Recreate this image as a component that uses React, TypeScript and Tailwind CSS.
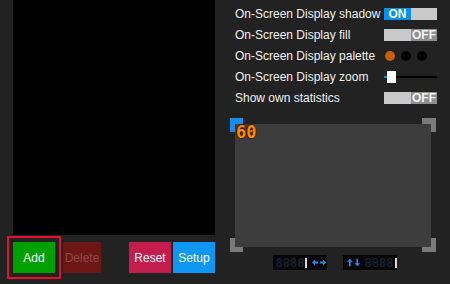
const rows = [
  { label: "On-Screen Display shadow", kind: "on" },
  { label: "On-Screen Display fill", kind: "off" },
  { label: "On-Screen Display palette", kind: "palette" },
  { label: "On-Screen Display zoom", kind: "slider" },
  { label: "Show own statistics", kind: "off" },
];

function Toggle({ on }: { on: boolean }) {
  return (
    <div className="flex h-[12px] w-[53px] shrink-0 text-[12px] font-bold leading-[12px]">
      {on ? (
        <>
          <span className="flex w-[27px] items-center justify-center bg-[#0a8ef0] text-white">ON</span>
          <span className="flex-1 bg-[#c9c9c9]" />
        </>
      ) : (
        <>
          <span className="w-[27px] bg-[#c9c9c9]" />
          <span className="flex flex-1 items-center justify-center bg-[#8e8e8e] text-[#f2f2f2]">OFF</span>
        </>
      )}
    </div>
  );
}

function Control({ kind }: { kind: string }) {
  if (kind === "on") return <Toggle on />;
  if (kind === "off") return <Toggle on={false} />;
  if (kind === "palette")
    return (
      <div className="flex w-[53px] shrink-0 items-center gap-[6px] pl-[1px]">
        <span className="h-[10px] w-[10px] rounded-full bg-[#c86000]" />
        <span className="h-[10px] w-[10px] rounded-full bg-black" />
        <span className="h-[10px] w-[10px] rounded-full bg-black" />
      </div>
    );
  return (
    <div className="relative flex h-[12px] w-[53px] shrink-0 items-center">
      <div className="h-[2px] w-full bg-black" />
      <div className="absolute left-0 h-[2px] w-[4px] bg-[#0a8ef0]" />
      <div className="absolute left-[3px] top-0 h-[12px] w-[9px] bg-white" />
    </div>
  );
}

function Arrows({ dir }: { dir: "h" | "v" }) {
  return (
    <svg width="16" height="9" viewBox="0 0 16 9" fill="#1e8ff0">
      {dir === "h" ? (
        <>
          <path d="M0 4.5 L3.5 1 V3.5 H7 V5.5 H3.5 V8 Z" />
          <path d="M16 4.5 L12.5 1 V3.5 H9 V5.5 H12.5 V8 Z" />
        </>
      ) : (
        <>
          <path d="M3.5 0 L7 3.5 H4.5 V9 H2.5 V3.5 H0 Z" />
          <path d="M12.5 9 L9 5.5 H11.5 V0 H13.5 V5.5 H16 Z" />
        </>
      )}
    </svg>
  );
}

function Digits() {
  return (
    <span className="flex items-center font-['DejaVu_Sans_Mono',monospace] text-[12px] leading-none text-[#17263a]">
      8888
      <span className="ml-[1px] h-[10px] w-[2px] bg-[#d8d8d8]" />
    </span>
  );
}

export default function App() {
  return (
    <div className="flex h-[284px] w-[450px] bg-[#222222] font-['Liberation_Sans',Arial,sans-serif] text-white">
      <div className="flex w-[225px] shrink-0 flex-col pl-[13px]">
        <div className="h-[235px] w-[202px] bg-black" />
        <div className="mt-[7px] flex h-[31px] w-[202px] items-center text-[12px]">
          <div className="-m-[6px] flex h-[43px] w-[54px] border-2 border-[#e5102e] p-[4px]">
            <button className="h-full w-full bg-[#00a000] text-white">Add</button>
          </div>
          <button className="ml-[8px] h-full w-[38px] bg-[#6e1616] text-[#8c4a4a]">Delete</button>
          <button className="ml-auto h-full w-[42px] bg-[#c21d4c] text-white">Reset</button>
          <button className="ml-[2px] h-full w-[42px] bg-[#0e97f2] text-white">Setup</button>
        </div>
      </div>

      <div className="flex flex-1 flex-col pl-[10px] pt-[3px]">
        {rows.map((row) => (
          <div key={row.label} className="flex h-[21px] items-center text-[12px] text-[#f0f0f0]">
            <span className="w-[149px] shrink-0 whitespace-nowrap">{row.label}</span>
            <Control kind={row.kind} />
          </div>
        ))}

        <div className="relative mt-[16px] h-[123px] w-[196px]">
          <div className="absolute -left-[5px] -top-[6px] h-[14px] w-[13px] bg-[#1a8cf0]" />
          <div className="absolute -right-[5px] -top-[6px] h-[14px] w-[14px] bg-[#7a7a7a]" />
          <div className="absolute -bottom-[5px] -left-[5px] h-[14px] w-[13px] bg-[#7a7a7a]" />
          <div className="absolute -bottom-[5px] -right-[5px] h-[14px] w-[14px] bg-[#7a7a7a]" />
          <div className="relative h-full w-full bg-[#3d3d3d]">
            <span
              className="absolute left-[1px] top-[0px] font-['DejaVu_Sans_Mono',monospace] text-[17px] font-bold leading-[17px] text-[#ff8a00]"
              style={{ textShadow: "1px 0 #3a1a00, -1px 0 #3a1a00, 0 1px #3a1a00, 0 -1px #3a1a00" }}
            >
              60
            </span>
          </div>
        </div>

        <div className="mt-[8px] flex w-[196px] justify-center gap-[16px] pl-[3px]">
          <div className="flex h-[15px] w-[54px] items-center gap-[5px] bg-[#060606] pl-[3px]">
            <Digits />
            <Arrows dir="h" />
          </div>
          <div className="flex h-[15px] w-[54px] items-center gap-[5px] bg-[#060606] pl-[4px]">
            <Arrows dir="v" />
            <Digits />
          </div>
        </div>
      </div>
    </div>
  );
}
